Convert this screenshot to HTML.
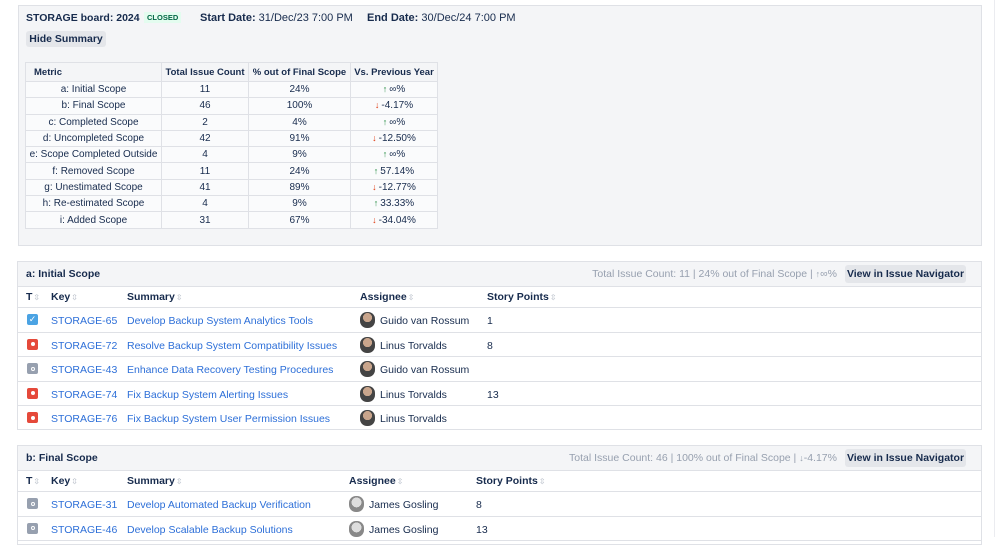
<!DOCTYPE html>
<html><head><meta charset="utf-8"><style>
*{box-sizing:border-box;margin:0;padding:0}
body{width:998px;height:537px;overflow:hidden;background:#fff;font-family:"Liberation Sans",sans-serif;font-size:10.5px;color:#172b4d;position:relative;white-space:nowrap}
.abs{position:absolute}
.sum{left:18px;top:5px;width:964px;height:241px;background:#f4f5f7;border:1px solid #dfe1e6}
.btn{background:#e4e6ea;border-radius:3px;font-weight:bold;color:#172b4d;font-size:10.5px;text-align:center;white-space:nowrap}
table.m{position:absolute;left:25px;top:62px;border-collapse:collapse;background:#fafbfc;font-size:10px;table-layout:fixed;width:412px}
table.m td,table.m th{border:1px solid #dfe1e6;height:16.3px;text-align:center;padding:0 2px;font-weight:normal;white-space:nowrap;overflow:hidden}
table.m th{font-weight:bold;height:19px;background:#f4f5f7;font-size:9.5px}
.up{color:#1f8a3c;font-size:9px;margin-right:2px}.dn{color:#de350b;font-size:9px;margin-right:2px}
.sec{position:absolute;left:17px;width:965px;border:1px solid #dfe1e6;background:#fff;overflow:hidden}
.sh{height:25px;background:#f4f5f7;border-bottom:1px solid #dfe1e6;position:relative}
.sh b{position:absolute;left:8px;top:6px;font-size:10.5px}
.sh .r{position:absolute;right:144px;top:6px;color:#97a0af;font-size:10.5px}
.sh .btn{position:absolute;right:15px;top:3px;width:121px;height:18px;line-height:18px}
.row{position:relative;height:24.5px;border-bottom:1px solid #dfe1e6}
.row span{position:absolute;top:7px;white-space:nowrap}
.hd span{font-weight:bold;top:4px}
.hd{height:21px}
.lnk{color:#2d6fd8}
.s{color:#b3bac5;font-size:8px;font-weight:normal;font-style:normal;margin-left:1px}
.ic{position:absolute;left:9px;top:6px;width:11px;height:11px;border-radius:2px}
.ic i{position:absolute;left:3.5px;top:3.5px;width:4px;height:4px;border-radius:2px;background:#fff}
.av{position:absolute;top:4px;width:15px;height:16px;border-radius:7px;background:radial-gradient(circle at 50% 35%,#c9a58c 0 35%,#444 36% 100%)}
</style></head><body>
<div class="abs sum"></div>
<div class="abs" style="left:26px;top:12px;font-size:10.5px;font-weight:bold">STORAGE board: 2024</div>
<div class="abs" style="left:144px;top:12px;background:#e3fcef;color:#006644;font-size:7.5px;font-weight:bold;padding:1px 3px">CLOSED</div>
<div class="abs" style="left:200px;top:12px;font-size:11px"><b>Start Date:</b> 31/Dec/23 7:00 PM</div>
<div class="abs" style="left:367px;top:12px;font-size:11px"><b>End Date:</b> 30/Dec/24 7:00 PM</div>
<div class="abs btn" style="left:26px;top:31px;width:80px;height:16px;line-height:16px">Hide Summary</div>
<table class="m">
<tr><th style="width:136px;text-align:left;padding-left:8px">Metric</th><th style="width:87px">Total Issue Count</th><th style="width:102px">% out of Final Scope</th><th style="width:87px">Vs. Previous Year</th></tr>
<tr><td>a: Initial Scope</td><td>11</td><td>24%</td><td><span class="up">↑</span>∞%</td></tr>
<tr><td>b: Final Scope</td><td>46</td><td>100%</td><td><span class="dn">↓</span>-4.17%</td></tr>
<tr><td>c: Completed Scope</td><td>2</td><td>4%</td><td><span class="up">↑</span>∞%</td></tr>
<tr><td>d: Uncompleted Scope</td><td>42</td><td>91%</td><td><span class="dn">↓</span>-12.50%</td></tr>
<tr><td>e: Scope Completed Outside</td><td>4</td><td>9%</td><td><span class="up">↑</span>∞%</td></tr>
<tr><td>f: Removed Scope</td><td>11</td><td>24%</td><td><span class="up">↑</span>57.14%</td></tr>
<tr><td>g: Unestimated Scope</td><td>41</td><td>89%</td><td><span class="dn">↓</span>-12.77%</td></tr>
<tr><td>h: Re-estimated Scope</td><td>4</td><td>9%</td><td><span class="up">↑</span>33.33%</td></tr>
<tr><td>i: Added Scope</td><td>31</td><td>67%</td><td><span class="dn">↓</span>-34.04%</td></tr>
</table>

<div class="sec" style="top:261px;height:169px">
<div class="sh"><b>a: Initial Scope</b><span class="r">Total Issue Count: 11 | 24% out of Final Scope | <span style="font-size:9px">↑</span>∞%</span><div class="btn">View in Issue Navigator</div></div>
<div class="row hd"><span style="left:8px">T<i class="s">⇳</i></span><span style="left:33px">Key<i class="s">⇳</i></span><span style="left:109px">Summary<i class="s">⇳</i></span><span style="left:342px">Assignee<i class="s">⇳</i></span><span style="left:469px">Story Points<i class="s">⇳</i></span></div>
<div class="row"><div class="ic" style="background:#4ba3e3;color:#fff;font-size:9px;line-height:11px;text-align:center">✓</div><span class="lnk" style="left:33px">STORAGE-65</span><span class="lnk" style="left:109px">Develop Backup System Analytics Tools</span><div class="av" style="left:342px"></div><span style="left:362px">Guido van Rossum</span><span style="left:469px">1</span></div>
<div class="row"><div class="ic" style="background:#e5493a"><i></i></div><span class="lnk" style="left:33px">STORAGE-72</span><span class="lnk" style="left:109px">Resolve Backup System Compatibility Issues</span><div class="av" style="left:342px"></div><span style="left:362px">Linus Torvalds</span><span style="left:469px">8</span></div>
<div class="row"><div class="ic" style="background:#97a0af"><i style="background:none;border:1px solid #fff"></i></div><span class="lnk" style="left:33px">STORAGE-43</span><span class="lnk" style="left:109px">Enhance Data Recovery Testing Procedures</span><div class="av" style="left:342px"></div><span style="left:362px">Guido van Rossum</span></div>
<div class="row"><div class="ic" style="background:#e5493a"><i></i></div><span class="lnk" style="left:33px">STORAGE-74</span><span class="lnk" style="left:109px">Fix Backup System Alerting Issues</span><div class="av" style="left:342px"></div><span style="left:362px">Linus Torvalds</span><span style="left:469px">13</span></div>
<div class="row" style="border:0"><div class="ic" style="background:#e5493a"><i></i></div><span class="lnk" style="left:33px">STORAGE-76</span><span class="lnk" style="left:109px">Fix Backup System User Permission Issues</span><div class="av" style="left:342px"></div><span style="left:362px">Linus Torvalds</span></div>
</div>

<div class="sec" style="top:445px;height:100px">
<div class="sh"><b>b: Final Scope</b><span class="r">Total Issue Count: 46 | 100% out of Final Scope | <span style="font-size:9px">↓</span>-4.17%</span><div class="btn">View in Issue Navigator</div></div>
<div class="row hd"><span style="left:8px">T<i class="s">⇳</i></span><span style="left:33px">Key<i class="s">⇳</i></span><span style="left:109px">Summary<i class="s">⇳</i></span><span style="left:331px">Assignee<i class="s">⇳</i></span><span style="left:458px">Story Points<i class="s">⇳</i></span></div>
<div class="row"><div class="ic" style="background:#97a0af"><i style="background:none;border:1px solid #fff"></i></div><span class="lnk" style="left:33px">STORAGE-31</span><span class="lnk" style="left:109px">Develop Automated Backup Verification</span><div class="av" style="left:331px;background:radial-gradient(circle at 50% 40%,#ddd 0 40%,#888 41% 100%)"></div><span style="left:351px">James Gosling</span><span style="left:458px">8</span></div>
<div class="row"><div class="ic" style="background:#97a0af"><i style="background:none;border:1px solid #fff"></i></div><span class="lnk" style="left:33px">STORAGE-46</span><span class="lnk" style="left:109px">Develop Scalable Backup Solutions</span><div class="av" style="left:331px;background:radial-gradient(circle at 50% 40%,#ddd 0 40%,#888 41% 100%)"></div><span style="left:351px">James Gosling</span><span style="left:458px">13</span></div>
</div>
<div class="abs" style="left:994px;top:0;width:1px;height:537px;background:#ebecf0"></div>
</body></html>
